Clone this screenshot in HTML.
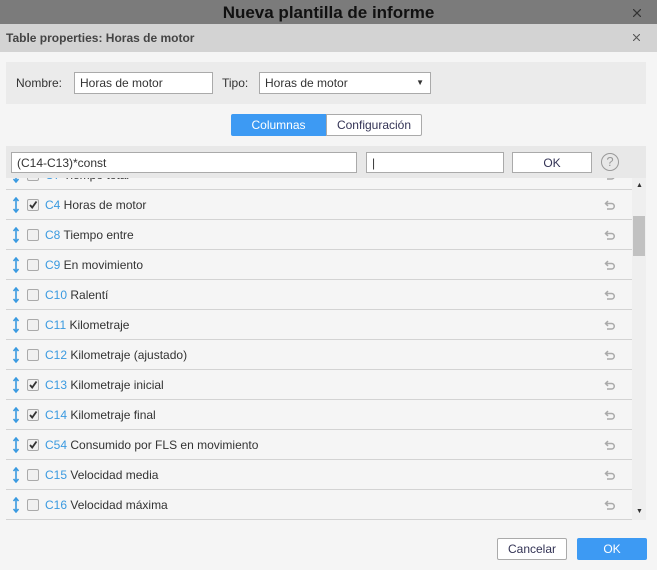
<!DOCTYPE html>
<html><head><style>
*{margin:0;padding:0;box-sizing:border-box}
body{width:657px;height:570px;overflow:hidden;background:#f5f5f5;font-family:"Liberation Sans",sans-serif;font-size:12px;color:#333;position:relative}
.abs{position:absolute}
.top{left:0;top:0;width:657px;height:24px;background:#7b7b7b;text-align:center;font-weight:bold;font-size:17px;line-height:25px;color:#111}
.hdr{left:0;top:24px;width:657px;height:28px;background:#d3d3d3;font-weight:bold;font-size:12px;line-height:28px;padding-left:6px;color:#444}
.panel{left:6px;top:62px;width:640px;height:42px;background:#ebebeb}
.inp{background:#fff;border:1px solid #aaa;height:22px;line-height:20px;padding-left:5px;font-size:12px}
.tab{top:114px;height:22px;line-height:22px;text-align:center;font-size:12px}
.frow{left:6px;top:146px;width:640px;height:32px;background:#e8e8e8}
.list{left:6px;top:178px;width:640px;height:342px;background:#f5f5f5;overflow:hidden}
.row{position:absolute;left:0;width:626px;height:30px;border-bottom:1px solid #d3d3d3}
.arr{position:absolute;left:7px;top:7px}
.cb{position:absolute;left:21px;top:9px;width:12px;height:12px;border:1px solid #aaa;border-radius:2px;background:#f0f0f0}
.lab{position:absolute;left:39px;top:8px;font-size:12px}
.lab b{font-weight:normal;color:#3a9ae0}
.und{position:absolute;left:598px;top:10px}
.sb{left:632px;top:178px;width:14px;height:342px;background:#efefef}
</style></head><body>
<div class="abs top">Nueva plantilla de informe</div>
<svg class="abs" style="left:633px;top:9px" width="8" height="8"><path d="M0 0L8 8M8 0L0 8" stroke="#333" stroke-width="1.2"/></svg>
<div class="abs hdr">Table properties: Horas de motor</div>
<svg class="abs" style="left:633px;top:34px" width="7" height="7"><path d="M0 0L7 7M7 0L0 7" stroke="#555" stroke-width="1.1"/></svg>
<div class="abs panel"></div>
<div class="abs" style="left:16px;top:76px">Nombre:</div>
<div class="abs inp" style="left:74px;top:72px;width:139px">Horas de motor</div>
<div class="abs" style="left:222px;top:76px">Tipo:</div>
<div class="abs inp" style="left:259px;top:72px;width:172px">Horas de motor<span style="position:absolute;right:6px;top:0;font-size:8px">▼</span></div>
<div class="abs tab" style="left:231px;width:95px;background:#3d9af3;color:#fff;border-radius:2px 0 0 2px">Columnas</div>
<div class="abs tab" style="left:326px;width:96px;background:#fff;border:1px solid #aaa;color:#335;border-radius:0 2px 2px 0;line-height:20px">Configuración</div>
<div class="abs frow"></div>
<div class="abs inp" style="left:11px;top:152px;width:346px;height:21px">(C14-C13)*const</div>
<div class="abs inp" style="left:366px;top:152px;width:138px;height:21px">|</div>
<div class="abs inp" style="left:512px;top:152px;width:80px;height:21px;text-align:center;padding:0;color:#335">OK</div>
<div class="abs" style="left:601px;top:153px;width:18px;height:18px;border:1px solid #999;border-radius:50%;text-align:center;line-height:16px;color:#999;font-size:13px">?</div>
<div class="abs list"></div>
<div class="abs sb"><div class="abs" style="left:4px;top:4px;font-size:7px;color:#333">▲</div><div class="abs" style="left:1px;top:38px;width:12px;height:40px;background:#c1c1c1"></div><div class="abs" style="left:4px;top:330px;font-size:7px;color:#333">▼</div></div>
<div class="abs" style="left:497px;top:538px;width:70px;height:22px;background:#fff;border:1px solid #aaa;border-radius:2px;text-align:center;line-height:20px;color:#335">Cancelar</div>
<div class="abs" style="left:577px;top:538px;width:70px;height:22px;background:#3d9af3;border-radius:2px;text-align:center;line-height:22px;color:#fff">OK</div>
<script>
var rows=[["C7","Tiempo total",0],["C4","Horas de motor",1],["C8","Tiempo entre",0],["C9","En movimiento",0],["C10","Ralentí",0],["C11","Kilometraje",0],["C12","Kilometraje (ajustado)",0],["C13","Kilometraje inicial",1],["C14","Kilometraje final",1],["C54","Consumido por FLS en movimiento",1],["C15","Velocidad media",0],["C16","Velocidad máxima",0]];
var h="";rows.forEach(function(r,i){var t=-18+i*30;
h+='<div class="row" style="top:'+t+'px"><svg class="arr" width="6" height="16" viewBox="0 0 6 16"><path d="M3 1V15M0.5 4L3 1 5.5 4M0.5 12L3 15 5.5 12" stroke="#3a9ae0" stroke-width="1.6" fill="none"/></svg><div class="cb">'+(r[2]?'<svg width="10" height="10" style="position:absolute;left:0;top:0"><path d="M2 5L4.2 7.5 8.5 1.5" stroke="#333" stroke-width="1.8" fill="none"/></svg>':'')+'</div><div class="lab"><b>'+r[0]+'</b> '+r[1]+'</div><svg class="und" width="12" height="10" viewBox="0 0 12 10"><path d="M4 1L1.5 3.5 4 6M1.5 3.5H7.5A2.6 2.6 0 0 1 7.5 9H3" stroke="#aaa" stroke-width="1.5" fill="none"/></svg></div>';});
document.querySelector('.list').innerHTML=h;
</script>
</body></html>
